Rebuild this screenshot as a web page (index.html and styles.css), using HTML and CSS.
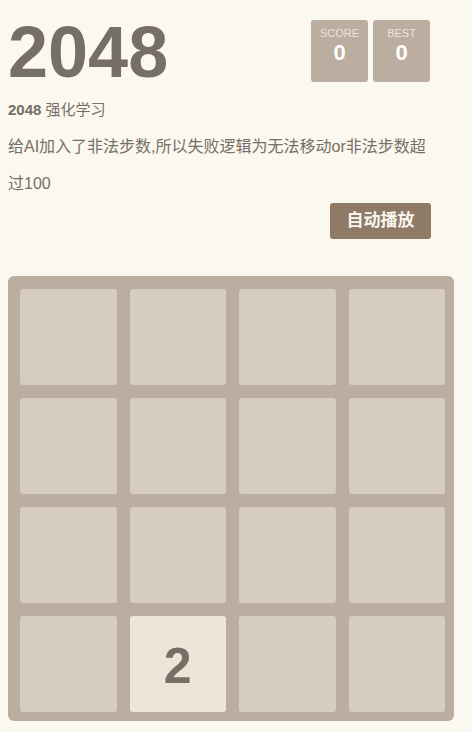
FILE: index.html
```html
<!DOCTYPE html>
<html lang="zh">
<head>
<meta charset="utf-8">
<title>2048</title>
<link rel="stylesheet" href="styles.css">
</head>
<body>
<div class="container">
  <div class="heading">
    <h1 class="title">2048</h1>
    <div class="scores">
      <div class="score-box"><div class="label">SCORE</div><div class="value">0</div></div>
      <div class="score-box"><div class="label">BEST</div><div class="value">0</div></div>
    </div>
  </div>
  <div class="subtitle"><strong>2048</strong> 强化学习</div>
  <p class="intro">给AI加入了非法步数,所以失败逻辑为无法移动or非法步数超过100</p>
  <div class="actions"><a class="auto-button">自动播放</a></div>
</div>
<div class="grid">
  <div class="cell"></div><div class="cell"></div><div class="cell"></div><div class="cell"></div>
  <div class="cell"></div><div class="cell"></div><div class="cell"></div><div class="cell"></div>
  <div class="cell"></div><div class="cell"></div><div class="cell"></div><div class="cell"></div>
  <div class="cell"></div><div class="cell tile-2">2</div><div class="cell"></div><div class="cell"></div>
</div>
</body>
</html>
```
FILE: styles.css
```css
html, body {
  margin: 0;
  padding: 0;
}
body {
  margin: 8px;
  background: #faf8ef;
  color: #776e65;
  font-family: "Liberation Sans", Arial, "Noto Sans CJK SC", sans-serif;
  font-size: 16px;
}
.container {
  width: 423px;
}
.heading {
  display: flex;
  justify-content: space-between;
  align-items: flex-start;
  padding-top: 8px;
}
.title {
  margin: 0;
  font-size: 72px;
  line-height: 72px;
  font-weight: bold;
  color: #776e65;
}
.scores {
  display: flex;
  gap: 5px;
  margin-top: 4px;
  margin-right: 1px;
}
.score-box {
  width: 57px;
  height: 62px;
  background: #bbada0;
  border-radius: 3px;
  text-align: center;
}
.label {
  padding-top: 7px;
  font-size: 11px;
  line-height: 13px;
  color: #eee4da;
}
.value {
  font-size: 22px;
  line-height: 26px;
  font-weight: bold;
  color: #fff;
}
.subtitle {
  margin-top: 11px;
  font-size: 15px;
  line-height: 22px;
}
.subtitle strong {
  font-weight: bold;
}
.intro {
  margin: 7px 0 0;
  font-size: 16px;
  line-height: 37px;
}
.actions {
  display: flex;
  justify-content: flex-end;
  margin-top: 1px;
}
.auto-button {
  display: block;
  height: 36px;
  line-height: 36px;
  padding: 0 16px;
  width: 69px;
  text-align: center;
  background: #8f7a66;
  color: #f9f6f2;
  font-weight: bold;
  font-size: 17px;
  border-radius: 3px;
}
.grid {
  margin-top: 37px;
  width: 446px;
  height: 445px;
  box-sizing: border-box;
  padding: 13px 9px 9px 12px;
  background: #bbada0;
  border-radius: 6px;
  display: grid;
  grid-template-columns: repeat(4, 1fr);
  grid-template-rows: repeat(4, 1fr);
  gap: 13px;
}
.cell {
  background: #d6cdbe;
  border-radius: 3px;
}
.tile-2 {
  background: #eee4da;
  color: #776e65;
  font-size: 50px;
  font-weight: bold;
  display: flex;
  align-items: center;
  justify-content: center;
  padding-top: 3px;
  box-sizing: border-box;
}
```
